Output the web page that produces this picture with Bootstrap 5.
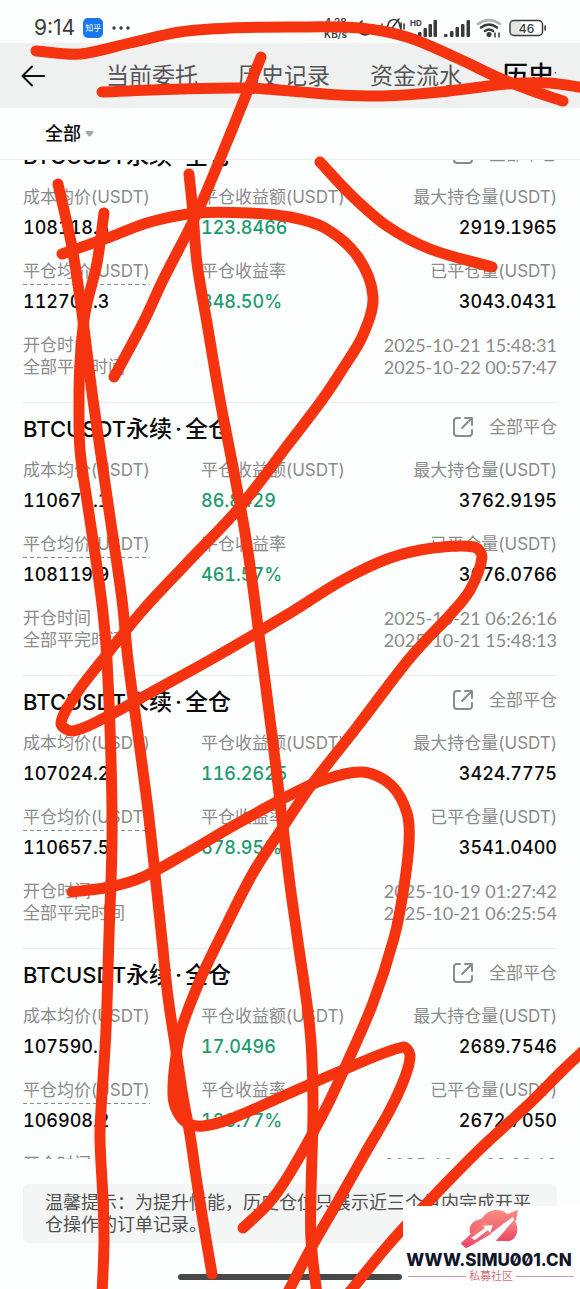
<!DOCTYPE html>
<html lang="zh-CN">
<head>
<meta charset="utf-8">
<meta name="viewport" content="width=device-width, initial-scale=1">
<title>历史仓位</title>
<link href="https://cdn.jsdelivr.net/npm/bootstrap@5.3.0/dist/css/bootstrap.min.css" rel="stylesheet">
<style>
  body { font-family: Inter, "Noto Sans CJK SC", sans-serif; background: #fdfefe; color: #0a0a0a; }
  .screen { height: 100vh; }
  .statusbar { height: 43px; padding: 12px 34px 0; color: #3a3a3a; }
  .clock { font-size: 21px; line-height: 32px; }
  .app-chip { width: 20px; height: 20px; border-radius: 5px; background: #1677f0; color: #fff; font-size: 8px; line-height: 20px; margin: 0 9px 0 8px; }
  .net-speed { font-size: 10px; line-height: 12px; font-weight: 600; margin-right: 7px; }
  .topbar { height: 65px; background: #eff1f1; padding: 0 24px 0 21px; }
  .tabs { gap: 40px; margin-left: 61px; }
  .tabs a { font-size: 23px; line-height: 34px; color: #555; text-decoration: none; }
  .tabs a.active { font-size: 26px; color: #0a0a0a; font-weight: 500; }
  .filterbar { height: 52px; padding: 0 45px; border-bottom: 1px solid #ededed; }
  .filterbar button { font-size: 18px; font-weight: 500; line-height: 26px; color: #0a0a0a; gap: 4px; }
  .records { padding: 0 23px; }
  .records-inner { margin-top: -31px; }
  .record { border-top: 1px solid #ebecec; padding: 8px 0 24px; }
  .record h2 { font-size: 22px; line-height: 36px; font-weight: 500; }
  .record h2 span { font-size: 23px; }
  .record h2 i { font-style: normal; margin: 0 3px; }
  .record-head { margin-bottom: 12px; }
  .muted-text { color: #8b8b8b; font-size: 17px; line-height: 22px; }
  .times time { font-family: Lato, "Noto Sans", sans-serif; font-size: 18px; }
  .share { gap: 16px; margin-bottom: 4px; }
  .figures { row-gap: 20px; margin-bottom: 20px; }
  .figures dt { font-weight: 400; color: #8b8b8b; font-size: 17px; line-height: 22px; white-space: nowrap; }
  .figures dd { font-weight: 500; font-size: 18px; line-height: 24px; margin: 8px 0 0; font-variant-numeric: tabular-nums; }
  .figures .gain { color: #1f9a70; }
  .hinted { position: relative; }
  .hinted::after { content: ""; position: absolute; left: 0; right: 0; bottom: -3px; height: 1px; background: repeating-linear-gradient(90deg, #8b8b8b 0 4px, transparent 4px 7px); }
  .notice { margin: 25px 23px 0; padding: 8px 22px 7px; border-radius: 6px; background: #f4f5f5; color: #505050; font-size: 18px; line-height: 22px; }
  .homebar { width: 224px; height: 6px; border-radius: 3px; background: #484848; margin: 31px auto 9px; }
  .ink { inset: 0; pointer-events: none; z-index: 2; }
  .ink path { fill: none; stroke: #f5340f; stroke-width: 11; stroke-linecap: round; stroke-linejoin: round; }
  .watermark { right: 0; bottom: 0; width: 177px; height: 83px; background: #fff; z-index: 3; padding: 2px 6px 0 1px; }
  .site { font-size: 17px; line-height: 20px; font-weight: 800; color: #11142a; font-feature-settings: "zero"; margin-top: 2px; }
  .community { font-size: 11px; line-height: 13px; color: #d6717d; gap: 3px; padding: 0 0 0 4px; }
  .community i { height: 1px; background: #df9199; }
</style>
</head>
<body>
<div class="screen position-relative d-flex flex-column overflow-hidden">
  <div class="statusbar d-flex justify-content-between flex-shrink-0">
    <div class="d-flex align-items-center">
      <span class="clock">9:14</span>
      <span class="app-chip text-center">知乎</span>
      <svg width="18" height="4"><g fill="#3a3a3a"><circle cx="2" cy="2" r="1.700"/><circle cx="9" cy="2" r="1.700"/><circle cx="16" cy="2" r="1.700"/></g></svg>
    </div>
    <div class="d-flex align-items-center">
      <span class="net-speed text-center">4.28<br>KB/s</span>
      <svg width="192" height="22" viewBox="354 17 192 22" fill="none" stroke="#3a3a3a" stroke-width="2" stroke-linecap="round">
        <path d="M363 20a8 8 0 1 0 9 12a9 9 0 0 1-9-12z" fill="#3a3a3a" stroke="none"/>
        <path d="M385 33c3-2 2-10 5-12q4-3 8 0c2 2 2 8 4 12zM386 36l13-17M380 26v4M404 24v5M382 24v8M401 23v7" stroke-width="1.6"/>
        <g fill="#3a3a3a" stroke="none">
          <rect x="413" y="34" width="3.500" height="3" rx="1"/><rect x="418" y="32" width="3.500" height="5" rx="1"/><rect x="423.500" y="28" width="3.500" height="9" rx="1"/><rect x="428.500" y="24" width="3.500" height="13" rx="1"/><rect x="433.500" y="20" width="3.500" height="17" rx="1"/>
          <rect x="444" y="34" width="3.500" height="3" rx="1"/><rect x="450" y="31" width="3.500" height="6" rx="1"/><rect x="455.500" y="27" width="3.500" height="10" rx="1"/><rect x="461" y="24" width="3.500" height="13" rx="1"/><rect x="466.500" y="20" width="3.500" height="17" rx="1"/>
          <text x="410" y="26" font-size="8" font-weight="700">HD</text>
          <circle cx="489" cy="34.500" r="2.500"/>
        </g>
        <path d="M478 24q11-8 22 0" stroke="#b0b0b0" stroke-width="2.500"/>
        <path d="M481 27.500q8-6 16 0M485 31q4-3 8 0" stroke-width="2.500"/>
        <path d="M495 33v4M499 33v4" stroke-width="1.500"/>
        <rect x="511" y="21" width="10" height="14" rx="3" fill="#e4e4e4" stroke="none"/>
        <rect x="510" y="20.500" width="32.500" height="15" rx="4" stroke-width="1.500"/>
        <path d="M545.200 26v4" stroke-width="1.600"/>
        <text x="526.500" y="32.500" font-size="12" font-weight="500" text-anchor="middle" fill="#3a3a3a" stroke="none">46</text>
      </svg>
    </div>
  </div>

  <header class="topbar d-flex align-items-center flex-shrink-0">
    <button class="btn p-0 border-0 d-flex" type="button" aria-label="返回">
      <svg width="24" height="22" fill="none" stroke="#111" stroke-width="2" stroke-linecap="round" stroke-linejoin="round"><path d="M23 11H1.500M11 1.500L1.500 11L11 20.500"/></svg>
    </button>
    <nav class="tabs d-flex align-items-center flex-nowrap overflow-hidden text-nowrap flex-grow-1">
      <a href="#">当前委托</a><a href="#">历史记录</a><a href="#">资金流水</a><a href="#" class="active">历史仓位</a>
    </nav>
  </header>

  <div class="filterbar d-flex align-items-center flex-shrink-0">
    <button type="button" class="btn p-0 border-0 d-flex align-items-center">全部
      <svg width="9" height="6"><path d="M1 0h7q1 1 0 2L5.500 5q-1 1-2 0L1 2Q0 1 1 0z" fill="#a8a8a8"/></svg>
    </button>
  </div>

  <main class="records flex-grow-1 overflow-hidden">
    <div class="records-inner" id="records"></div>
  </main>

  <div class="notice flex-shrink-0">温馨提示：为提升性能，历史仓位只展示近三个月内完成开平仓操作的订单记录。</div>
  <div class="homebar flex-shrink-0"></div>

  <svg class="ink position-absolute w-100 h-100" id="ink" viewBox="0 0 580 1289" preserveAspectRatio="none" aria-hidden="true"></svg>

  <div class="watermark position-absolute d-flex flex-column align-items-center">
    <svg width="60" height="40" viewBox="458 1206 60 40">
      <defs><linearGradient id="rose" x1="0" y1="0" x2="0" y2="1"><stop offset="0" stop-color="#f98d80"/><stop offset="1" stop-color="#ee4065"/></linearGradient></defs>
      <path d="M471 1234C467 1230 468 1222 474 1219C478 1217 480 1218 482 1215C487 1207 499 1206 505 1211L506 1212L517 1208L515 1219L513 1218L515 1221C518 1228 516 1238 507 1239H483L465 1246L460 1242Z" fill="url(#rose)"/>
      <path d="M463 1248L489 1232L502 1222L512 1215L513 1218L494 1240H482L470 1249Z" fill="#fff"/>
      <path d="M460 1241L483 1220L491 1224L490 1232L465 1246Z" fill="url(#rose)"/>
      <path d="M496 1238L514 1219C517 1226 516 1238 507 1239Z" fill="url(#rose)"/>
      <path d="M474 1238L487 1228L489 1231L492 1223L482 1224L484 1226L470 1236Z" fill="#fff"/>
    </svg>
    <div class="site text-nowrap">WWW.SIMU001.CN</div>
    <div class="community d-flex align-items-center w-100"><i class="flex-grow-1"></i>私募社区<i class="flex-grow-1"></i></div>
  </div>
</div>

<script src="https://cdn.jsdelivr.net/npm/bootstrap@5.3.0/dist/js/bootstrap.bundle.min.js"></script>
<script>
  // cost, pnl, max size, close price, pnl rate, closed size, opened at, closed at
  const records = [
    ['108118.3', '123.8466', '2919.1965', '112701.3', '848.50%', '3043.0431', '2025-10-21 15:48:31', '2025-10-22 00:57:47'],
    ['110671.1', '86.8429', '3762.9195', '108119.9', '461.57%', '3676.0766', '2025-10-21 06:26:16', '2025-10-21 15:48:13'],
    ['107024.2', '116.2625', '3424.7775', '110657.5', '678.95%', '3541.0400', '2025-10-19 01:27:42', '2025-10-21 06:25:54'],
    ['107590.1', '17.0496', '2689.7546', '106908.2', '126.77%', '2672.7050', '2025-10-18 09:22:12', '2025-10-19 01:20:36']
  ];
  document.getElementById('records').innerHTML = records.map(r => `
    <article class="record">
      <div class="record-head d-flex justify-content-between align-items-center">
        <h2 class="m-0">BTCUSDT<span>永续<i>·</i>全仓</span></h2>
        <div class="share d-flex align-items-center muted-text">
          <svg width="20" height="20" fill="none" stroke="#8b8b8b" stroke-width="2" stroke-linecap="round" stroke-linejoin="round"><path d="M7 1H4Q1 1 1 4V16Q1 19 4 19H16Q19 19 19 16V13M9 11L18.500 1.500M12 1H19V8"/></svg>
          <span>全部平仓</span>
        </div>
      </div>
      <dl class="figures row g-0">
        <div class="col-4"><dt>成本均价(USDT)</dt><dd>${r[0]}</dd></div>
        <div class="col-4"><dt>平仓收益额(USDT)</dt><dd class="gain">${r[1]}</dd></div>
        <div class="col-4 text-end"><dt>最大持仓量(USDT)</dt><dd>${r[2]}</dd></div>
        <div class="col-4"><dt><span class="hinted d-inline-block">平仓均价(USDT)</span></dt><dd>${r[3]}</dd></div>
        <div class="col-4"><dt>平仓收益率</dt><dd class="gain">${r[4]}</dd></div>
        <div class="col-4 text-end"><dt>已平仓量(USDT)</dt><dd>${r[5]}</dd></div>
      </dl>
      <div class="muted-text times">
        <div class="d-flex justify-content-between"><span>开仓时间</span><time>${r[6]}</time></div>
        <div class="d-flex justify-content-between"><span>全部平完时间</span><time>${r[7]}</time></div>
      </div>
    </article>`).join('');

  // Freehand pen strokes: each list of x,y samples becomes one smooth curve.
  const strokes = [
    '36,51 80,54 130,43 180,32 230,28 290,27 360,28 407,37 457,58 497,77 530,90 563,101',
    '102,92 180,89 245,88 290,91 340,95 383,96 440,92 497,85 523,83 550,83 585,88',
    '261,57 248,90 227,142 197,213 163,280 143,323 114,377',
    '320,162 350,194 387,226 430,249 492,267',
    '58,184 72,247 82,313 93,400 110,517 122,600 128,660 137,727 148,810 157,893 162,940 168,997 177,1057 183,1097 190,1135 197,1183 205,1233 212,1274',
    '104,213 97,263 85,313 80,363 79,400 80,450 88,507 97,567 103,613 107,660 111,760 112,843 109,935 106,1030 101,1110 100,1140 103,1200 104,1243 102,1295',
    '62,254 110,237 150,222 197,213 250,213 290,217 325,228 358,257 373,297 363,335 342,370 322,400 290,442 240,507 187,563 143,610 100,663 77,693 61,723 73,731 110,715 150,693 210,660 290,613 343,580 390,558 433,548 474,547 482,557 470,590 450,615 427,639 405,664 357,727 310,787 283,827 253,873 220,938 200,980 181,1030 175,1063 173,1095 177,1111 187,1123 203,1126 233,1118 290,1093 343,1070 403,1047 410,1055 405,1077 390,1110 367,1150 337,1203 310,1250 288,1292',
    '72,892 110,887 143,877 187,853 233,826 290,795 323,780 363,772 391,785 407,813 409,843 403,893 394,938 373,1003 347,1063 325,1110 290,1173 269,1203 243,1228',
    '189,174 193,213 197,263 207,323 220,400 233,467 247,545 261,650 273,743 283,827 290,885 297,935 310,1030 313,1105 311,1193 311,1240 317,1295',
    '590,1045 580,1054 563,1070 530,1103 477,1152 430,1200 390,1243 348,1294'
  ];
  const smooth = s => {
    const p = s.split(' ').map(q => q.split(',').map(Number));
    let d = 'M' + p[0];
    for (let i = 0; i < p.length - 1; i++) {
      const a = p[i - 1] || p[i], b = p[i], c = p[i + 1], e = p[i + 2] || c;
      const t = Math.hypot(c[0] - b[0], c[1] - b[1]);
      const k1 = t / (t + Math.hypot(b[0] - a[0], b[1] - a[1])), k2 = t / (t + Math.hypot(e[0] - c[0], e[1] - c[1]));
      d += `C${b[0] + (c[0] - a[0]) * k1 / 3},${b[1] + (c[1] - a[1]) * k1 / 3} ${c[0] - (e[0] - b[0]) * k2 / 3},${c[1] - (e[1] - b[1]) * k2 / 3} ${c}`;
    }
    return d;
  };
  document.getElementById('ink').innerHTML = strokes.map(s => `<path d="${smooth(s)}"/>`).join('');
</script>
</body>
</html>
